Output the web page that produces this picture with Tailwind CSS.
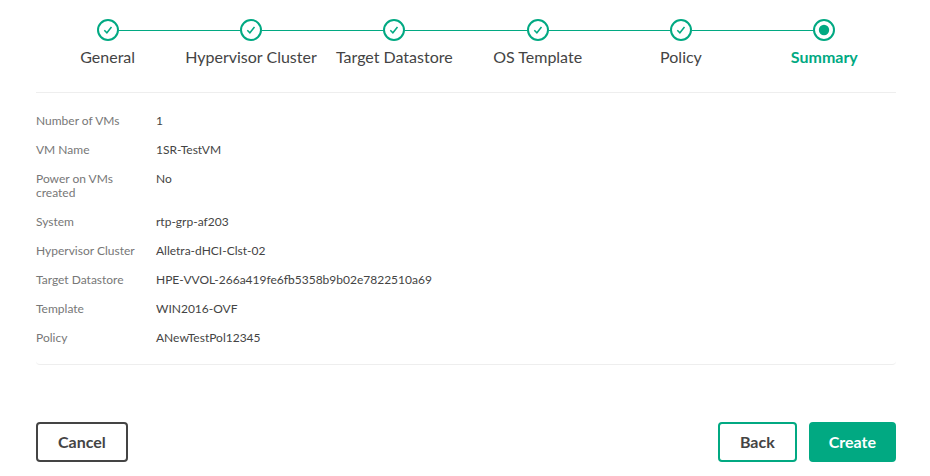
<!DOCTYPE html>
<html lang="en">
<head>
<meta charset="utf-8">
<meta name="viewport" content="width=device-width, initial-scale=1">
<title>Create virtual machine</title>
<script src="https://cdn.jsdelivr.net/npm/@tailwindcss/browser@4"></script>
</head>
<body class="bg-white font-[Lato,'Noto_Sans',sans-serif] text-[#444444]">
<svg class="hidden" aria-hidden="true">
  <symbol id="done" viewBox="0 0 22 22">
    <circle cx="11" cy="11" r="10" fill="none" stroke="#01a982" stroke-width="2"/>
    <path d="M7.3 11.2 L9.9 13.8 L14.5 8" fill="none" stroke="#01a982" stroke-width="1.5"/>
  </symbol>
  <symbol id="current" viewBox="0 0 22 22">
    <circle cx="11" cy="11" r="10" fill="none" stroke="#01a982" stroke-width="2"/>
    <circle cx="11" cy="11" r="5.2" fill="#01a982"/>
  </symbol>
</svg>
<main class="pt-[19px] pr-[34px] pb-3 pl-9">
  <ol class="grid grid-cols-6 text-center text-base leading-5">
    <li>
      <div class="flex items-center"><span class="h-px flex-1"></span><svg class="size-[22px]"><use href="#done"/></svg><span class="h-px flex-1 bg-[#01a982]"></span></div>
      <p class="mt-1.5 whitespace-nowrap">General</p>
    </li>
    <li>
      <div class="flex items-center"><span class="h-px flex-1 bg-[#01a982]"></span><svg class="size-[22px]"><use href="#done"/></svg><span class="h-px flex-1 bg-[#01a982]"></span></div>
      <p class="mt-1.5 whitespace-nowrap">Hypervisor Cluster</p>
    </li>
    <li>
      <div class="flex items-center"><span class="h-px flex-1 bg-[#01a982]"></span><svg class="size-[22px]"><use href="#done"/></svg><span class="h-px flex-1 bg-[#01a982]"></span></div>
      <p class="mt-1.5 whitespace-nowrap">Target Datastore</p>
    </li>
    <li>
      <div class="flex items-center"><span class="h-px flex-1 bg-[#01a982]"></span><svg class="size-[22px]"><use href="#done"/></svg><span class="h-px flex-1 bg-[#01a982]"></span></div>
      <p class="mt-1.5 whitespace-nowrap">OS Template</p>
    </li>
    <li>
      <div class="flex items-center"><span class="h-px flex-1 bg-[#01a982]"></span><svg class="size-[22px]"><use href="#done"/></svg><span class="h-px flex-1 bg-[#01a982]"></span></div>
      <p class="mt-1.5 whitespace-nowrap">Policy</p>
    </li>
    <li aria-current="step">
      <div class="flex items-center"><span class="h-px flex-1 bg-[#01a982]"></span><svg class="size-[22px]"><use href="#current"/></svg><span class="h-px flex-1"></span></div>
      <p class="mt-1.5 font-bold whitespace-nowrap text-[#01a982]">Summary</p>
    </li>
  </ol>
  <dl class="mt-[25px] grid grid-cols-[104px_1fr] gap-x-4 gap-y-[15px] rounded-b border-y border-[#eeeeee] pt-[21px] pb-[19px] text-xs leading-[14px] [&>dt]:text-[#777777]">
    <dt>Number of VMs</dt><dd>1</dd>
    <dt>VM Name</dt><dd>1SR-TestVM</dd>
    <dt>Power on VMs<br>created</dt><dd>No</dd>
    <dt>System</dt><dd>rtp-grp-af203</dd>
    <dt>Hypervisor Cluster</dt><dd>Alletra-dHCI-Clst-02</dd>
    <dt>Target Datastore</dt><dd>HPE-VVOL-266a419fe6fb5358b9b02e7822510a69</dd>
    <dt>Template</dt><dd>WIN2016-OVF</dd>
    <dt>Policy</dt><dd>ANewTestPol12345</dd>
  </dl>
  <div class="mt-[57px] flex gap-3 text-base leading-5 font-bold">
    <button type="button" class="mr-auto h-10 rounded border-2 border-[#444444] px-5">Cancel</button>
    <button type="button" class="h-10 rounded border-2 border-[#01a982] px-5">Back</button>
    <button type="button" class="h-10 rounded border-2 border-[#01a982] bg-[#01a982] px-[18px] text-white">Create</button>
  </div>
</main>
</body>
</html>
